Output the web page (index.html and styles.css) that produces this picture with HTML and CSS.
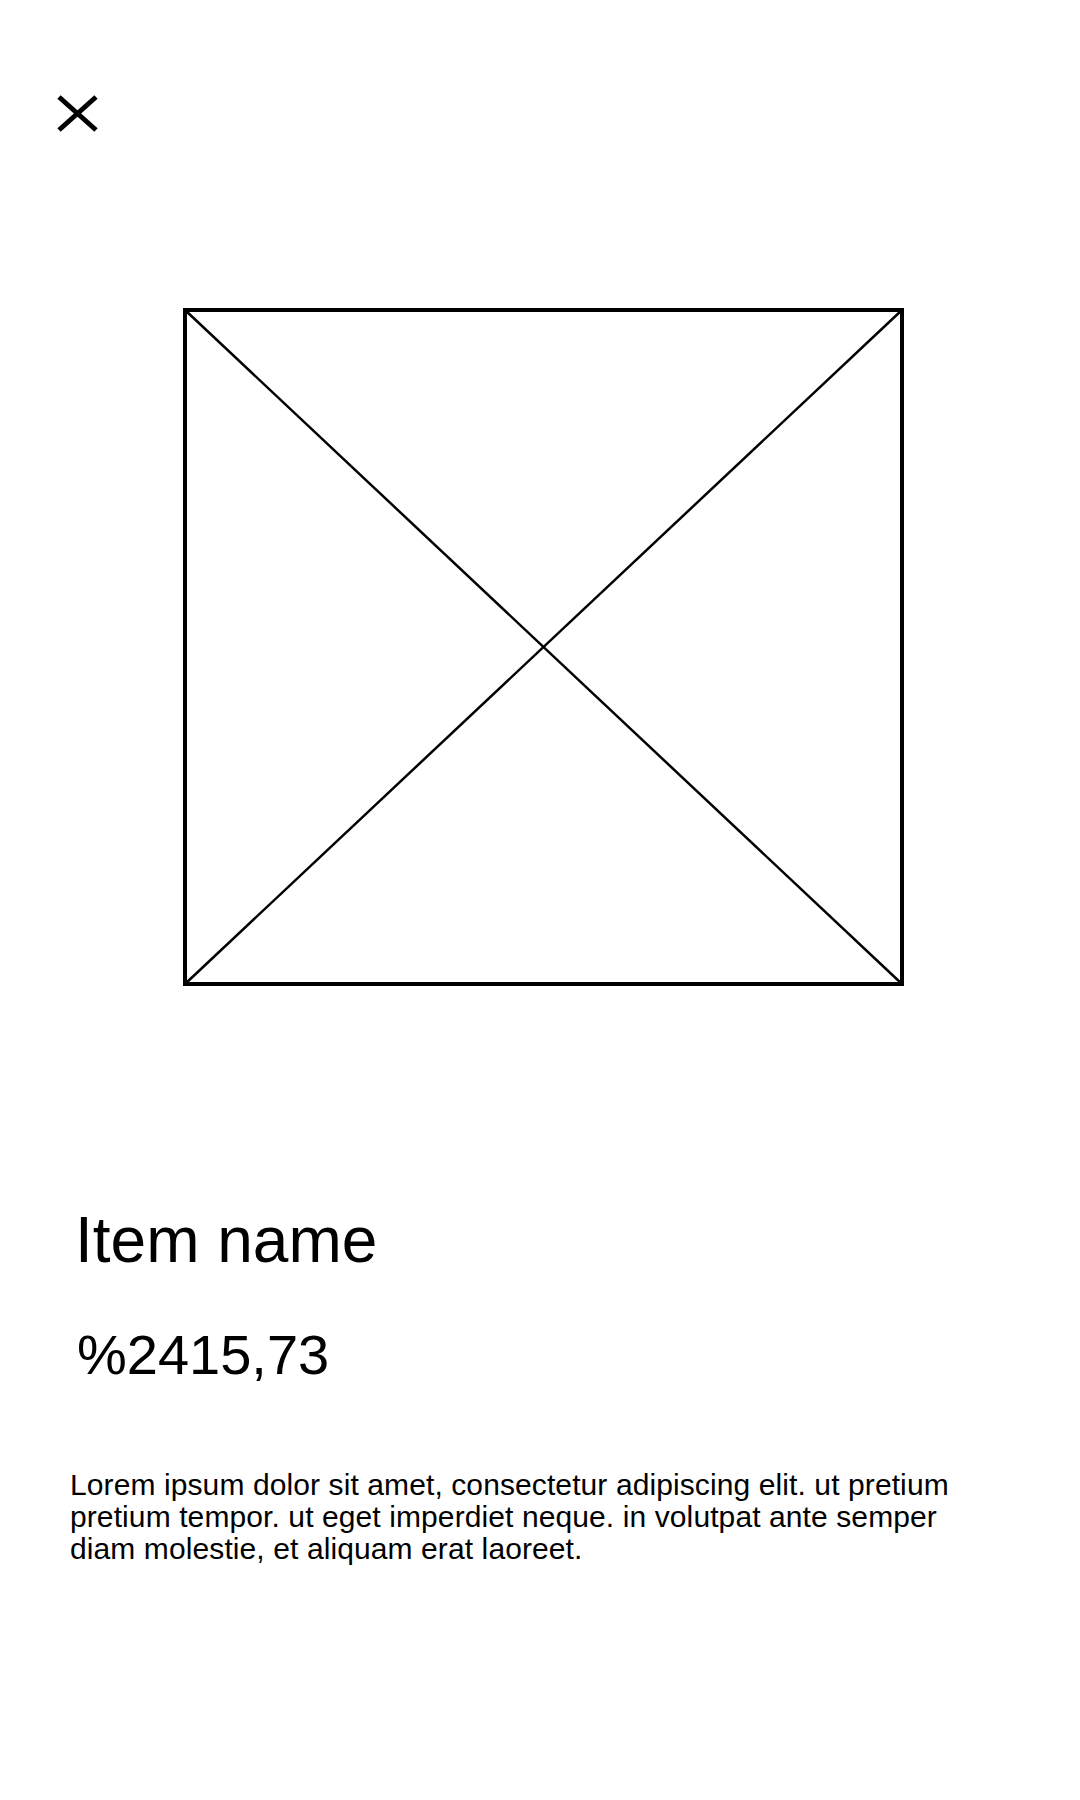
FILE: index.html
```html
<!DOCTYPE html>
<html lang="en">
<head>
<meta charset="utf-8">
<title>Item</title>
<link rel="stylesheet" href="styles.css">
</head>
<body>
<div class="page">
  <header class="top">
    <button class="close" aria-label="Close">
      <svg width="42" height="38" viewBox="0 0 42 38">
        <line x1="2" y1="2" x2="39" y2="35" stroke="#000" stroke-width="5"/>
        <line x1="39" y1="2" x2="2" y2="35" stroke="#000" stroke-width="5"/>
      </svg>
    </button>
  </header>
  <div class="image">
    <svg width="721" height="678" viewBox="0 0 721 678">
      <rect x="2" y="2" width="717" height="674" fill="none" stroke="#000" stroke-width="4"/>
      <line x1="2" y1="2" x2="719" y2="676" stroke="#000" stroke-width="2.5"/>
      <line x1="719" y1="2" x2="2" y2="676" stroke="#000" stroke-width="2.5"/>
    </svg>
  </div>
  <h1 class="name">Item name</h1>
  <div class="price">%2415,73</div>
  <p class="desc">Lorem ipsum dolor sit amet, consectetur adipiscing elit. ut pretium pretium tempor. ut eget imperdiet neque. in volutpat ante semper diam molestie, et aliquam erat laoreet.</p>
</div>
</body>
</html>
```
FILE: styles.css
```css
html, body {
  margin: 0;
  padding: 0;
  background: #fff;
}
body {
  font-family: "Liberation Sans", Arial, sans-serif;
  color: #000;
}
.page {
  width: 1080px;
  height: 1800px;
  display: flex;
  flex-direction: column;
}
.top {
  padding: 95px 0 0 57px;
}
.close {
  display: block;
  border: 0;
  background: none;
  padding: 0;
  margin: 0;
  cursor: pointer;
}
.close svg {
  display: block;
}
.image {
  margin: 175px 0 0 183px;
}
.image svg {
  display: block;
}
.name {
  margin: 217px 0 0 75px;
  font-size: 64px;
  font-weight: normal;
  line-height: normal;
}
.price {
  margin: 45px 0 0 77px;
  font-size: 56px;
  line-height: normal;
}
.desc {
  margin: 82px 0 0 70px;
  width: 900px;
  font-size: 30px;
  line-height: 32px;
  letter-spacing: 0.1px;
}
```
